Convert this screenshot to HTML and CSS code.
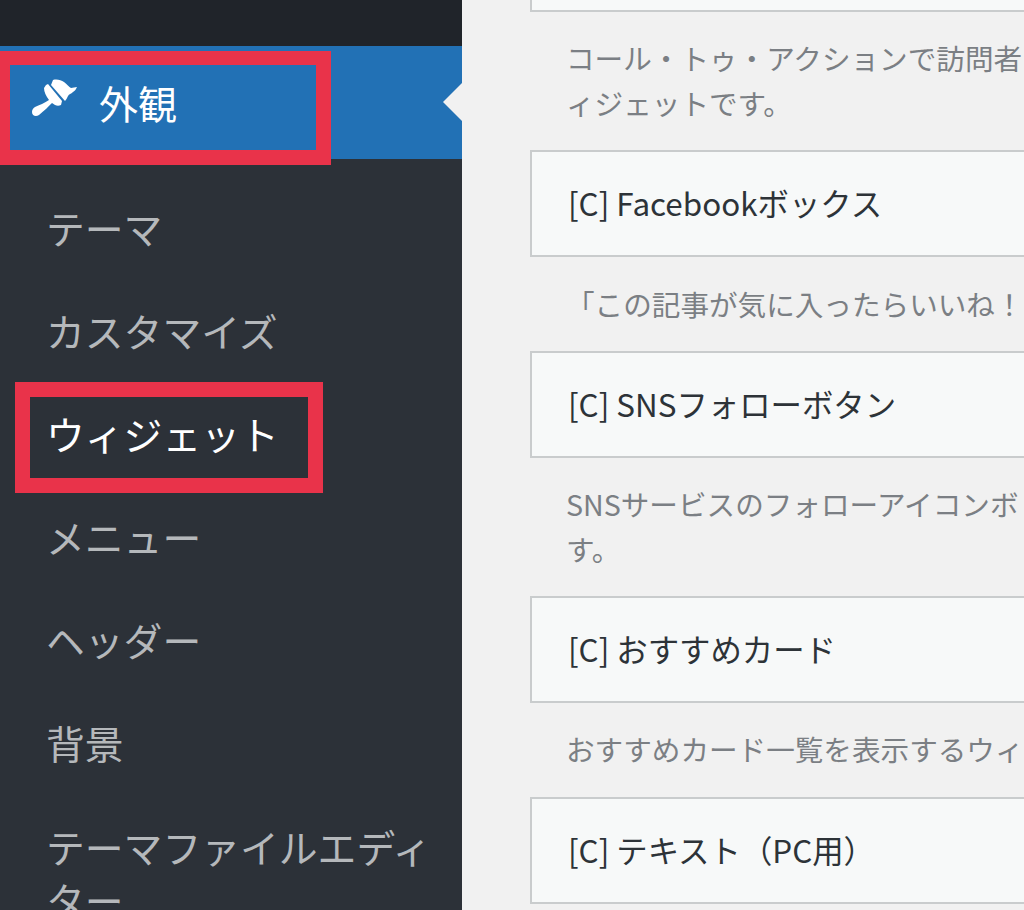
FILE: index.html
```html
<!DOCTYPE html>
<html lang="ja">
<head>
    <meta charset="UTF-8">
    <title>ウィジェット</title>
    <link rel="stylesheet" href="styles.css">
</head>
<body>
<div class="page">
    <div class="sidebar">
        <div class="top_bar"></div>
        <div class="menu_head">
            <svg class="brush" viewBox="0 0 46 38" width="46" height="38">
                <path d="M22 1 C26 0 30 1 33 3 C36 5 38 8 40 9 C42 9 44 8 46 8 C45 10 44 12 42 13 C40 15 38 15 37 17 C36 19 35 21 34 22 L20 6 Z" fill="#fff"/>
                <path d="M15 6 L17 5 L31 22 L30 26 C28 27 26 27 24 26 L21 24 C18 27 13 32 8 36 C5 38 1 37 1 33 C1 31 2 29 4 28 C8 26 14 24 18 21 C15 17 13 13 13 9 Z" fill="#fff"/>
            </svg>
            <span class="head_text">外観</span>
            <div class="arrow"></div>
        </div>
        <div class="menu_list">
            <a class="menu_item">テーマ</a>
            <a class="menu_item">カスタマイズ</a>
            <a class="menu_item current">ウィジェット</a>
            <a class="menu_item">メニュー</a>
            <a class="menu_item">ヘッダー</a>
            <a class="menu_item">背景</a>
            <a class="menu_item wrap">テーマファイルエディ<br>ター</a>
        </div>
        <div class="mark mark_head"></div>
        <div class="mark mark_item"></div>
    </div>
    <div class="main">
        <div class="widget first"></div>
        <p class="desc two">コール・トゥ・アクションで訪問者<br>ィジェットです。</p>
        <div class="widget">[C] Facebookボックス</div>
        <p class="desc one">「この記事が気に入ったらいいね！</p>
        <div class="widget">[C] SNSフォローボタン</div>
        <p class="desc two">SNSサービスのフォローアイコンボ<br>す。</p>
        <div class="widget">[C] おすすめカード</div>
        <p class="desc one last">おすすめカード一覧を表示するウィ</p>
        <div class="widget">[C] テキスト（PC用）</div>
    </div>
</div>
</body>
</html>
```

FILE: styles.css
```css
* {
    margin: 0;
    padding: 0;
    box-sizing: border-box;
}

html, body {
    width: 1024px;
    height: 910px;
    overflow: hidden;
}

body {
    background: #f1f1f1;
    font-family: "Noto Sans CJK JP", "Noto Sans", sans-serif;
}

.page {
    display: flex;
    height: 910px;
    overflow: hidden;
}

.sidebar {
    position: relative;
    width: 462px;
    height: 910px;
    flex-shrink: 0;
    background: #2c3138;
    overflow: hidden;
}

.top_bar {
    height: 46px;
    background: #20242a;
}

.menu_head {
    position: relative;
    display: flex;
    align-items: center;
    height: 113px;
    padding-left: 31px;
    background: #2271b5;
    color: #fff;
}

.brush {
    flex-shrink: 0;
    margin-top: -9px;
}

.head_text {
    margin: 0 0 0 22px;
    font-size: 39px;
    line-height: 1;
}

.arrow {
    position: absolute;
    top: 37px;
    right: 0;
    border-top: 19px solid transparent;
    border-bottom: 19px solid transparent;
    border-right: 19px solid #f1f1f1;
}

.menu_list {
    display: flex;
    flex-direction: column;
    padding: 17px 10px 0 46px;
}

.menu_item {
    height: 103px;
    font-size: 38.8px;
    line-height: 103px;
    color: #b5b8bb;
    white-space: nowrap;
}

.menu_item.current {
    color: #fff;
}

.menu_item.wrap {
    height: auto;
    margin-top: 26px;
    line-height: 53px;
}

.mark {
    position: absolute;
    border-style: solid;
    border-color: #e9334a;
}

.mark_head {
    top: 51px;
    left: 0;
    width: 331px;
    height: 114px;
    border-width: 14px 15px 15px 10px;
}

.mark_item {
    top: 382px;
    left: 15px;
    width: 308px;
    height: 111px;
    border-width: 15px;
}

.main {
    width: 562px;
    flex-shrink: 0;
    padding-left: 68px;
}

.widget {
    width: 494px;
    height: 107px;
    padding-left: 36px;
    border: 2px solid #c9cccd;
    border-right: 0;
    background: #f7f9f9;
    font-size: 31.4px;
    line-height: 101px;
    color: #2d3338;
    white-space: nowrap;
}

.widget.first {
    height: 12px;
    border-top: 0;
}

.desc {
    padding-left: 36px;
    font-size: 28.6px;
    line-height: 45px;
    color: #7b7f84;
    white-space: nowrap;
}

.desc.one {
    height: 94px;
    padding-top: 24px;
}

.desc.one.last {
    padding-top: 23px;
}

.desc.two {
    height: 138px;
    padding-top: 23px;
}
```
